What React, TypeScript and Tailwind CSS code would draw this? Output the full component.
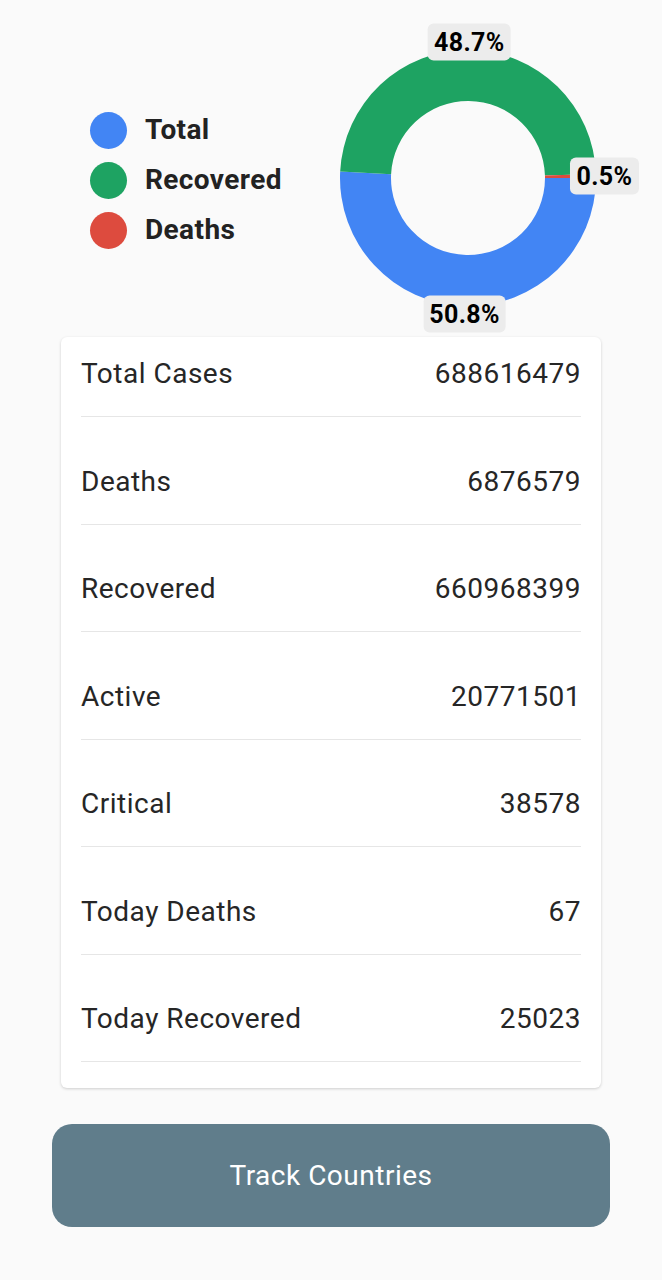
const slices = [
  { label: "Total", value: 50.8, color: "#4285f4" },
  { label: "Recovered", value: 48.7, color: "#1ea362" },
  { label: "Deaths", value: 0.5, color: "#dd4b3e" },
];

const stats = [
  ["Total Cases", "688616479"],
  ["Deaths", "6876579"],
  ["Recovered", "660968399"],
  ["Active", "20771501"],
  ["Critical", "38578"],
  ["Today Deaths", "67"],
  ["Today Recovered", "25023"],
];

const SIZE = 300;
const C = SIZE / 2;
const R = 128;
const r = 77;
const LABEL_R = 136.5;

function pt(rad: number, a: number) {
  return [C + rad * Math.cos(a), C + rad * Math.sin(a)];
}

function arc(a0: number, a1: number) {
  const large = a1 - a0 > Math.PI ? 1 : 0;
  const [x0, y0] = pt(R, a0);
  const [x1, y1] = pt(R, a1);
  const [x2, y2] = pt(r, a1);
  const [x3, y3] = pt(r, a0);
  return `M${x0} ${y0} A${R} ${R} 0 ${large} 1 ${x1} ${y1} L${x2} ${y2} A${r} ${r} 0 ${large} 0 ${x3} ${y3} Z`;
}

function Donut() {
  const total = slices.reduce((s, x) => s + x.value, 0);
  let start = 0;
  const parts = slices.map((s) => {
    const sweep = (s.value / total) * Math.PI * 2;
    const a0 = start;
    const a1 = start + sweep;
    start = a1;
    const mid = (a0 + a1) / 2;
    const [lx, ly] = pt(LABEL_R, mid);
    return { ...s, d: arc(a0, a1), lx, ly };
  });

  return (
    <div className="relative h-[300px] w-[300px] shrink-0">
      <svg width={SIZE} height={SIZE} viewBox={`0 0 ${SIZE} ${SIZE}`}>
        {parts.map((p) => (
          <path key={p.label} d={p.d} fill={p.color} />
        ))}
      </svg>
      {parts.map((p) => (
        <div
          key={p.label + "-lbl"}
          className="absolute -translate-x-1/2 -translate-y-1/2 rounded-md bg-[#ececec] px-[6px] py-[5px] text-[25px] font-bold leading-[27px] tracking-[0.4px] text-black"
          style={{ left: p.lx, top: p.ly }}
        >
          {p.value}%
        </div>
      ))}
    </div>
  );
}

export default function App() {
  return (
    <div className="min-h-[1280px] w-full bg-[#fafafa] font-['Roboto',sans-serif]">
      <div className="flex items-center pt-[28px]">
        <div className="ml-[90px] mt-[4px] flex w-[228px] shrink-0 flex-col gap-[13px]">
          {slices.map((s) => (
            <div key={s.label} className="flex h-[37px] items-center gap-[18px]">
              <span
                className="h-[37px] w-[37px] rounded-full"
                style={{ backgroundColor: s.color }}
              />
              <span className="text-[28px] font-bold tracking-[0.4px] text-[#222]">{s.label}</span>
            </div>
          ))}
        </div>
        <Donut />
      </div>

      <div className="mx-[61px] mt-[9px] rounded-md bg-white px-[20px] pb-[26px] pt-[22px] shadow-[0_1px_3px_rgba(0,0,0,0.18)]">
        <div className="flex flex-col gap-[49.5px]">
          {stats.map(([k, v]) => (
            <div key={k}>
              <div className="flex h-[30px] items-center justify-between text-[28px] tracking-[0.5px] text-[#262626]">
                <span>{k}</span>
                <span>{v}</span>
              </div>
              <div className="mt-[27px] h-px bg-[#e6e6e6]" />
            </div>
          ))}
        </div>
      </div>

      <div className="mx-[52px] mt-[36px]">
        <button className="flex h-[103px] w-full items-center justify-center rounded-[20px] bg-[#607d8b] text-[28px] tracking-[0.5px] text-white">
          Track Countries
        </button>
      </div>
    </div>
  );
}
